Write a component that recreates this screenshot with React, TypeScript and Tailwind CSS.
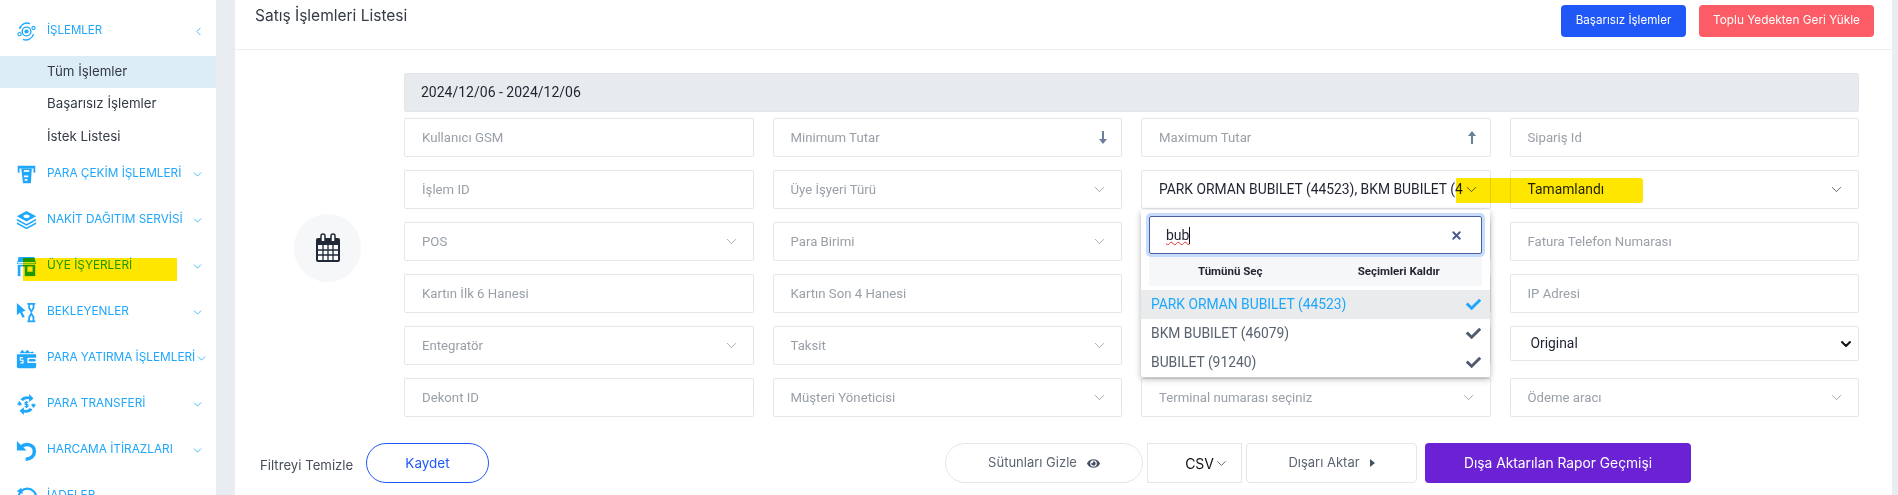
import { ChevronDown, ChevronLeft, X } from "lucide-react";
import { FaCheck, FaEye } from "react-icons/fa";
import type { ReactNode } from "react";

const blue = "#1fa7fb";

const IconSlot = ({ children }: { children: ReactNode }) => (
  <svg width="21" height="21" viewBox="0 0 24 24" fill={blue} className="shrink-0">
    {children}
  </svg>
);

const menuIcons: Record<string, ReactNode> = {
  islem: (
    <IconSlot>
      <circle cx="12" cy="12" r="5" fill="none" stroke={blue} strokeWidth="1.6" />
      <circle cx="12" cy="12" r="2.4" />
      <path d="M4 9a9 9 0 0 1 12-6M20 15a9 9 0 0 1-12 6" fill="none" stroke={blue} strokeWidth="1.6" />
      <circle cx="4" cy="15" r="1.8" fill="none" stroke={blue} strokeWidth="1.3" />
      <circle cx="20" cy="8" r="1.8" fill="none" stroke={blue} strokeWidth="1.3" />
      <circle cx="5" cy="7" r="1.2" />
    </IconSlot>
  ),
  atm: (
    <IconSlot>
      <path d="M2 2h20v8h-2V5H4v5H2z" />
      <path d="M6 5h12l-1 17H8z" />
      <rect x="9" y="7" width="6" height="2" fill="#fff" />
      <path d="M9 13h5v2H9zM10 17h3v2h-3z" fill="#fff" />
    </IconSlot>
  ),
  cash: (
    <IconSlot>
      <path d="M12 1 23 7l-11 6L1 7z" />
      <path d="M1 10l11 6 11-6v2l-11 6-11-6zM1 14l11 6 11-6v2l-11 6-11-6z" />
      <ellipse cx="12" cy="7" rx="3.5" ry="2" fill="#fff" />
    </IconSlot>
  ),
  store: (
    <IconSlot>
      <path d="M3 1h18l2 8H1z" />
      <path d="M2 10h20v13H2z" />
      <path d="M2 7h20v1.500H2z" fill="#fff" />
      <rect x="5" y="12" width="5" height="11" fill="#fff" />
      <rect x="13" y="12" width="6" height="6" fill="#fff" />
    </IconSlot>
  ),
  wait: (
    <IconSlot>
      <path d="M1 1l10 9-4 1 3 6-2.500 1-3-6L1 15z" />
      <path d="M13 1h9v2h-1v4l-3 5 3 5v4h1v2h-9v-2h1v-4l3-5-3-5V3h-1z" />
      <path d="M16 3h3v3l-1.500 3L16 6z" fill="#fff" />
      <path d="M16 18l1.500-3 1.500 3v3h-3z" fill="#fff" />
    </IconSlot>
  ),
  wallet: (
    <IconSlot>
      <path d="M4 6l3-4 3 3 3-3 3 3 3-1 2 2z" />
      <path d="M1 7h22v14a2 2 0 0 1-2 2H3a2 2 0 0 1-2-2z" />
      <rect x="13" y="11" width="11" height="6" rx="1" fill="#fff" />
      <rect x="14.500" y="12.500" width="8" height="3" rx="1.500" />
      <path d="M8 11H5v3h3v3H5" fill="none" stroke="#fff" strokeWidth="1.300" />
    </IconSlot>
  ),
  transfer: (
    <IconSlot>
      <path d="M5 6a10 10 0 0 1 10-3V0l5 5-5 4V6a7 7 0 0 0-7 2zM19 18a10 10 0 0 1-10 3v3l-5-5 5-4v3a7 7 0 0 0 7-2z" />
      <path d="M1 12l3-4 3 4H5.500v1H3v-1zM23 12l-3 4-3-4h1.500v-1H21v1z" />
      <path d="M14 9.500h-3.500v2.500h3v2.500H10M12 8v8" fill="none" stroke={blue} strokeWidth="1.300" />
    </IconSlot>
  ),
  undo: (
    <IconSlot>
      <path d="M1 1v11h11z" />
      <path d="M6 8c5-5 15-3 15 5 0 5-4 9-10 9" fill="none" stroke={blue} strokeWidth="4" />
    </IconSlot>
  ),
  refund: (
    <IconSlot>
      <circle cx="13" cy="13" r="10" fill="none" stroke={blue} strokeWidth="2.500" />
      <path d="M1 6l5-4 2 7z" />
    </IconSlot>
  ),
};

const menu = [
  { icon: "atm", label: "PARA ÇEKİM İŞLEMLERİ" },
  { icon: "cash", label: "NAKİT DAĞITIM SERVİSİ" },
  { icon: "store", label: "ÜYE İŞYERLERİ" },
  { icon: "wait", label: "BEKLEYENLER" },
  { icon: "wallet", label: "PARA YATIRMA İŞLEMLERİ" },
  { icon: "transfer", label: "PARA TRANSFERİ" },
  { icon: "undo", label: "HARCAMA İTİRAZLARI" },
  { icon: "refund", label: "İADELER" },
];

const fields = [
  { label: "Kullanıcı GSM" },
  { label: "Minimum Tutar", kind: "down" },
  { label: "Maximum Tutar", kind: "up" },
  { label: "Sipariş Id" },
  { label: "İşlem ID" },
  { label: "Üye İşyeri Türü", kind: "select" },
  { label: "PARK ORMAN BUBILET (44523), BKM BUBILET (4", kind: "open" },
  { label: "Tamamlandı", kind: "value" },
  { label: "POS", kind: "select" },
  { label: "Para Birimi", kind: "select" },
  { label: "" },
  { label: "Fatura Telefon Numarası" },
  { label: "Kartın İlk 6 Hanesi" },
  { label: "Kartın Son 4 Hanesi" },
  { label: "" },
  { label: "IP Adresi" },
  { label: "Entegratör", kind: "select" },
  { label: "Taksit", kind: "select" },
  { label: "" },
  { label: "Original", kind: "native" },
  { label: "Dekont ID" },
  { label: "Müşteri Yöneticisi", kind: "select" },
  { label: "Terminal numarası seçiniz", kind: "select" },
  { label: "Ödeme aracı", kind: "select" },
];

const options = [
  { label: "PARK ORMAN BUBILET (44523)", active: true },
  { label: "BKM BUBILET (46079)", active: false },
  { label: "BUBILET (91240)", active: false },
];

function CalendarIcon() {
  return (
    <svg width="26" height="30" viewBox="0 0 26 30" fill="none">
      <rect x="1" y="5" width="24" height="24" rx="2" fill="#1f2937" />
      <rect x="3" y="12" width="20" height="15" fill="#fff" />
      <path d="M3 17h20M3 22h20M8 12v15M13 12v15M18 12v15" stroke="#1f2937" strokeWidth="1.300" />
      <path d="M6 8V3a2 2 0 0 1 4 0v5M16 8V3a2 2 0 0 1 4 0v5" stroke="#1f2937" strokeWidth="1.500" fill="#fff" />
    </svg>
  );
}

// narrow arrow used by the min / max amount inputs
function ThinArrow({ up }: { up?: boolean }) {
  return (
    <svg width="8" height="13" viewBox="0 0 8 13" fill="#6b7f99" className={`mr-[1px] ${up ? "rotate-180" : ""}`}>
      <path d="M3 0h2v8h3l-4 5-4-5h3z" />
    </svg>
  );
}

function Field({ label, kind }: { label: string; kind?: string }) {
  const isValue = kind === "open" || kind === "value" || kind === "native";
  return (
    <div className={`relative flex items-center self-start rounded-[2px] border border-[#e3e6ea] bg-white pl-[17px] pr-[13px] ${kind === "native" ? "h-[35px]" : "h-[39px]"} ${isValue ? "text-[13.850px]" : "text-[13.200px]"}`}>
      <span className={`flex-1 whitespace-nowrap ${isValue ? "text-[#1f2430]" : "text-[#99a0a8]"} ${kind === "native" ? "ml-[3px]" : ""}`}>
        {label}
      </span>
      {kind === "select" && <ChevronDown size={17} strokeWidth={1} className="text-[#7b8794]" />}
      {kind === "value" && <ChevronDown size={17} strokeWidth={1} className="text-[#1f2937]" />}
      {kind === "open" && <ChevronDown size={17} strokeWidth={1} className="shrink-0 text-[#1f2937]" />}
      {kind === "native" && <ChevronDown size={16} strokeWidth={3} className="mr-[-9px] text-[#111]" />}
      {kind === "down" && <ThinArrow />}
      {kind === "up" && <ThinArrow up />}
      {kind === "open" && (
        <div className="absolute left-[-1px] top-[39px] z-10 w-[349px] rounded-[2px] bg-white shadow-[0_2px_6px_rgba(0,0,0,0.3)]">
          <div className="px-[8px] pt-[6px]">
            <div className="flex h-[38px] items-center justify-between rounded-[2px] border border-[#4a5f9c] pl-[16px] pr-[18px] shadow-[0_0_0_3px_#c5dcfb]">
              <span className="border-r border-[#111] text-[14px] leading-[17px] text-[#1f2430] underline decoration-[#e0312c] decoration-wavy decoration-1">bub</span>
              <X size={13} strokeWidth={3.5} className="text-[#455a8f]" />
            </div>
            <div className="mt-[3px] grid h-[29px] grid-cols-2 items-center bg-[#f5f7f9] text-center text-[11.500px] font-bold text-[#1f2430]">
              <span className="pr-[4px]">Tümünü Seç</span>
              <span>Seçimleri Kaldır</span>
            </div>
          </div>
          <div className="mt-[4px]">
            {options.map((o) => (
              <div
                key={o.label}
                className={`flex h-[29px] items-center justify-between pl-[10px] pr-[9px] text-[13.850px] ${o.active ? "bg-[#e9ebed] text-[#1fa7fb]" : "text-[#59636f]"}`}
              >
                {o.label}
                <FaCheck size={15} className={o.active ? "text-[#1fa7fb]" : "text-[#4f5b6e]"} />
              </div>
            ))}
          </div>
        </div>
      )}
    </div>
  );
}

export default function App() {
  return (
    <div className="relative flex h-[495px] w-[1898px] overflow-hidden bg-[#e9ecf1] font-['Inter',sans-serif] text-[#343a46]">
      {/* Sidebar */}
      <aside className="w-[216px] shrink-0 bg-white pt-[19px]">
        <div className="flex h-[24px] items-center pl-[16px] pr-[11px]">
          {menuIcons.islem}
          <span className="ml-[10px] flex-1 text-[11.500px] text-[#1fa7fb]">İŞLEMLER</span>
          <ChevronLeft size={13} strokeWidth={1.500} className="text-[#1fa7fb]" />
        </div>
        <div className="mt-[13px] flex h-[32px] items-center bg-[#dcedf8] pl-[47px] text-[13.300px]">Tüm İşlemler</div>
        <div className="flex h-[32px] items-center pl-[47px] text-[13.300px]">Başarısız İşlemler</div>
        <div className="flex h-[33px] items-center pl-[47px] text-[13.300px]">İstek Listesi</div>
        <ul className="-mt-[2px]">
          {menu.map((m) => (
            <li key={m.label} className="flex h-[46px] items-center pl-[16px] pr-[12px]">
              {menuIcons[m.icon]}
              <span className="ml-[10px] flex-1 whitespace-nowrap text-[11.800px] text-[#1fa7fb]">{m.label}</span>
              {m.icon !== "refund" && <ChevronDown size={13} strokeWidth={1.500} className="shrink-0 text-[#1fa7fb]" />}
            </li>
          ))}
        </ul>
      </aside>

      {/* Highlighter marks */}
      <div className="pointer-events-none absolute left-[23px] top-[258px] z-20 h-[23px] w-[154px] bg-[#ffe600] mix-blend-multiply" />
      <div className="pointer-events-none absolute left-[1456px] top-[178px] z-20 h-[25px] w-[187px] rounded-r-[3px] bg-[#ffe600] mix-blend-multiply" />

      {/* Card */}
      <main className="ml-[19px] w-[1657px] bg-white">
        <header className="flex h-[50px] items-start justify-between border-b border-[#edeff2] pl-[20px] pr-[18px] pt-[5px]">
          <h1 className="text-[15.500px] font-normal leading-[22px] text-[#343a46]">Satış İşlemleri Listesi</h1>
          <div className="flex gap-[13px]">
            <button className="h-[32px] w-[125px] rounded-[4px] bg-[#2058f8] text-[11.600px] text-white">Başarısız İşlemler</button>
            <button className="h-[32px] w-[175px] rounded-[4px] bg-[#fc5c65] text-[11.800px] text-white">Toplu Yedekten Geri Yükle</button>
          </div>
        </header>

        <div className="flex pl-[59px] pr-[33px] pt-[23px]">
          <div className="flex w-[110px] shrink-0 items-start pt-[141px]">
            <div className="flex h-[68px] w-[67px] items-center justify-center rounded-full bg-[#f6f7f9]">
              <CalendarIcon />
            </div>
          </div>
          <div className="flex-1 font-['Roboto',sans-serif]">
            <div className="mb-[6px] flex h-[39px] items-center rounded-[2px] border border-[#e3e6ea] bg-[#e8ebee] pl-[16px] text-[14px] text-[#1f2430]">
              2024/12/06 - 2024/12/06
            </div>
            <div className="grid grid-cols-4 gap-x-[19px] gap-y-[13px]">
              {fields.map((f, i) => (
                <Field key={i} label={f.label} kind={f.kind} />
              ))}
            </div>
          </div>
        </div>

        <div className="mt-[26px] flex h-[40px] items-center pl-[25px]">
          <span className="mt-[5px] w-[93px] whitespace-nowrap text-[13.200px] text-[#474e59]">Filtreyi Temizle</span>
          <button className="ml-[13px] h-[40px] w-[123px] rounded-full border border-[#2058f8] text-[13.500px] text-[#2058f8]">Kaydet</button>
          <button className="ml-[456px] flex h-[40px] w-[198px] items-center justify-center gap-[10px] rounded-full border border-[#e3e6ea] text-[13px] text-[#5b6470]">
            Sütunları Gizle <FaEye size={13} className="text-[#465063]" />
          </button>
          <div className="ml-[4px] flex h-[40px] w-[95px] items-center justify-end border border-[#e3e6ea] pr-[12px] text-[14px] text-[#111]">
            CSV <ChevronDown size={15} strokeWidth={1} />
          </div>
          <button className="ml-[4px] flex h-[40px] w-[171px] items-center justify-center gap-[10px] rounded-[4px] border border-[#e3e6ea] text-[13px] text-[#5b6470]">
            Dışarı Aktar <span className="h-0 w-0 border-y-[4px] border-l-[5px] border-y-transparent border-l-[#465063]" />
          </button>
          <button className="ml-[8px] h-[40px] w-[266px] rounded-[4px] bg-[#6a22d4] text-[13.800px] text-white">Dışa Aktarılan Rapor Geçmişi</button>
        </div>
      </main>
    </div>
  );
}
